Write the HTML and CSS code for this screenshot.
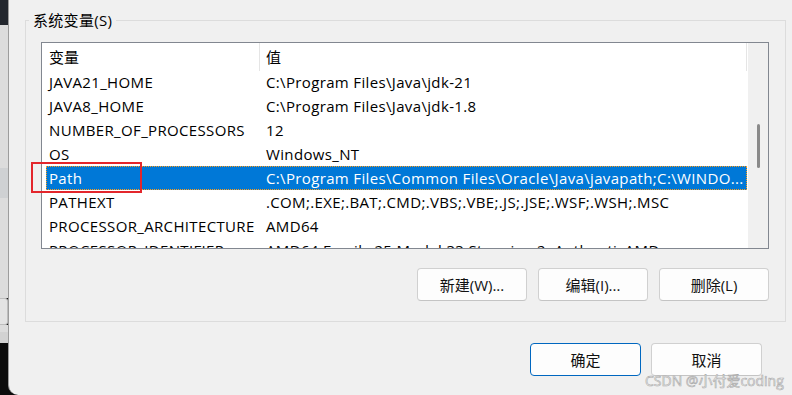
FILE: index.html
```html
<!DOCTYPE html>
<html lang="zh-CN">
<head>
  <meta charset="UTF-8">
  <title>环境变量</title>
  <link rel="stylesheet" href="styles.css">
</head>
<body>
  <div class="desk">
    <div class="desk-top"></div>
    <div class="desk-pane"></div>
    <div class="desk-band"></div>
    <div class="desk-pane desk-pane-mid"></div>
    <div class="desk-box"></div>
    <div class="desk-pane desk-pane-low"></div>
    <div class="desk-foot"></div>
    <div class="desk-term"></div>
  </div>

  <div class="window">
    <fieldset class="group">
      <legend>系统变量(S)</legend>
      <div class="group-body">
        <div class="list">
          <div class="list-main">
            <div class="list-head">
              <div class="head-cell">变量</div>
              <div class="head-cell">值</div>
            </div>
            <div class="row"><div class="name">JAVA21_HOME</div><div class="value">C:\Program Files\Java\jdk-21</div></div>
            <div class="row"><div class="name">JAVA8_HOME</div><div class="value">C:\Program Files\Java\jdk-1.8</div></div>
            <div class="row"><div class="name">NUMBER_OF_PROCESSORS</div><div class="value">12</div></div>
            <div class="row"><div class="name">OS</div><div class="value">Windows_NT</div></div>
            <div class="row selected"><div class="name">Path</div><div class="value">C:\Program Files\Common Files\Oracle\Java\javapath;C:\WINDO...</div></div>
            <div class="row"><div class="name">PATHEXT</div><div class="value">.COM;.EXE;.BAT;.CMD;.VBS;.VBE;.JS;.JSE;.WSF;.WSH;.MSC</div></div>
            <div class="row"><div class="name">PROCESSOR_ARCHITECTURE</div><div class="value">AMD64</div></div>
            <div class="row"><div class="name">PROCESSOR_IDENTIFIER</div><div class="value">AMD64 Family 25 Model 33 Stepping 2, AuthenticAMD</div></div>
          </div>
          <div class="scrollbar"><div class="thumb"></div></div>
        </div>

        <div class="actions">
          <button class="btn">新建(W)...</button>
          <button class="btn">编辑(I)...</button>
          <button class="btn">删除(L)</button>
        </div>
      </div>
    </fieldset>

    <div class="footer">
      <button class="btn btn-default">确定</button>
      <button class="btn">取消</button>
    </div>
  </div>

  <div class="mark"></div>
  <div class="watermark">CSDN @小付爱coding</div>
</body>
</html>
```

FILE: styles.css
```css
body {
  margin: 0;
  width: 792px;
  height: 395px;
  overflow: hidden;
  position: relative;
  display: flex;
  background: #0c0c0c;
  font-family: "Open Sans", "Noto Sans CJK SC", sans-serif;
  font-size: 15px;
  color: #000;
}

/* desktop strip behind the dialog */
.desk {
  width: 8px;
  display: flex;
  flex-direction: column;
}
.desk-top {
  height: 25px;
  background: #23272e;
}
.desk-pane {
  height: 143px;
  background: #dcdcdc;
}
.desk-band {
  height: 30px;
  background: #cfd1d3;
}
.desk-pane-mid {
  height: 100px;
}
.desk-box {
  height: 27px;
  background: #e3e3e3;
  border: 1px solid #bdbdbd;
  border-left: none;
  border-radius: 0 3px 3px 0;
  box-sizing: border-box;
}
.desk-pane-low {
  height: 7px;
}
.desk-foot {
  height: 11px;
  background: #d2d2d2;
}
.desk-term {
  flex: 1;
  background: #0c0c0c;
}

/* dialog */
.window {
  flex: 1;
  background: #f0f0f0;
  border-left: 1px solid #9c9c9c;
  border-bottom-left-radius: 10px;
  padding-top: 10px;
}

.group {
  margin: 0 6px 0 16px;
  padding: 0;
  border: 1px solid #dcdcdc;
}
.group legend {
  margin-left: 3px;
  padding: 0 4px;
  line-height: 20px;
  font-size: 15px;
  letter-spacing: 0.3px;
}
.group-body {
  padding: 12px 16px 20px 15px;
}

.list {
  height: 207px;
  box-sizing: border-box;
  border: 1px solid #828790;
  background: #fff;
  display: flex;
}
.list-main {
  flex: 1;
  overflow: hidden;
}
.list-head {
  display: grid;
  grid-template-columns: 218px 1fr;
  height: 27px;
  margin-right: 1px;
}
.head-cell {
  line-height: 28px;
  padding-left: 7px;
  border-right: 1px solid #e5e5e5;
}
.head-cell + .head-cell {
  padding-left: 6px;
}

.row {
  display: grid;
  grid-template-columns: 214px 1fr;
  height: 24px;
  line-height: 24px;
  margin: 0 1px 0 4px;
  box-sizing: border-box;
  letter-spacing: 0.35px;
}
.name {
  padding-left: 3px;
  white-space: nowrap;
}
.value {
  padding-left: 6px;
  white-space: nowrap;
  overflow: hidden;
  text-overflow: ellipsis;
}
.row.selected {
  background: #0078d7;
  color: #fff;
  outline: 1px dotted #ff9d1a;
  outline-offset: -1px;
}

.scrollbar {
  width: 20px;
  background: #f0f0f0;
  display: flex;
  justify-content: center;
  padding-top: 81px;
  box-sizing: border-box;
}
.thumb {
  width: 3px;
  height: 44px;
  border-radius: 2px;
  background: #8a8a8a;
}

.actions {
  display: flex;
  justify-content: flex-end;
  gap: 11px;
  margin-top: 19px;
}

.btn {
  width: 110px;
  height: 33px;
  background: #fdfdfd;
  border: 1px solid #d0d0d0;
  border-bottom-color: #c4c4c4;
  border-radius: 4px;
  font-family: "Open Sans", "Noto Sans CJK SC", sans-serif;
  font-size: 15px;
  color: #111;
  padding: 0;
}
.btn-default {
  border-color: #0067c0;
}

.footer {
  display: flex;
  justify-content: flex-end;
  gap: 10px;
  margin: 21px 30px 0 0;
}
.footer .btn {
  width: 111px;
}

/* red annotation drawn over the screenshot */
.mark {
  position: absolute;
  left: 31px;
  top: 162px;
  width: 111px;
  height: 31px;
  box-sizing: border-box;
  border: 2px solid #e3262c;
}

.watermark {
  position: absolute;
  left: 645px;
  top: 371px;
  font-size: 14px;
  line-height: 20px;
  color: #fafafa;
  -webkit-text-stroke: 0.6px #a9a9a9;
  white-space: nowrap;
}
```
